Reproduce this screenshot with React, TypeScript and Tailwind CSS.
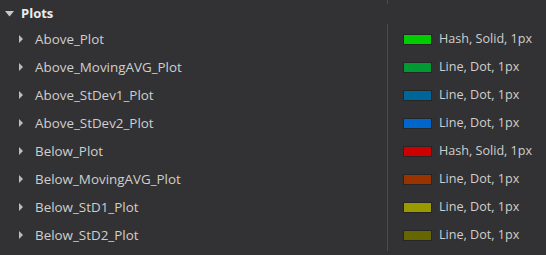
import React from 'react';

const rows = [
  { name: 'Above_Plot', color: '#00cc00', style: 'Hash, Solid, 1px' },
  { name: 'Above_MovingAVG_Plot', color: '#009933', style: 'Line, Dot, 1px' },
  { name: 'Above_StDev1_Plot', color: '#006699', style: 'Line, Dot, 1px' },
  { name: 'Above_StDev2_Plot', color: '#0066cc', style: 'Line, Dot, 1px' },
  { name: 'Below_Plot', color: '#cc0000', style: 'Hash, Solid, 1px' },
  { name: 'Below_MovingAVG_Plot', color: '#993300', style: 'Line, Dot, 1px' },
  { name: 'Below_StD1_Plot', color: '#999900', style: 'Line, Dot, 1px' },
  { name: 'Below_StD2_Plot', color: '#666600', style: 'Line, Dot, 1px' },
];

const Caret = ({ open }: { open?: boolean }) =>
  open ? (
    <svg width="9" height="6" viewBox="0 0 9 6" className="shrink-0">
      <path d="M0 0 H9 L4.5 5.5 Z" fill="#c8c8c8" />
    </svg>
  ) : (
    <svg width="4" height="8" viewBox="0 0 4 8" className="shrink-0">
      <path d="M0 0 L4 4 L0 8 Z" fill="#bdbdbd" />
    </svg>
  );

export default function App() {
  return (
    <div
      className="w-[546px] h-[255px] bg-[#323234] overflow-hidden"
      style={{ fontFamily: '"Open Sans", "Liberation Sans", sans-serif' }}
    >
      <div className="flex h-[24px]">
        <div className="flex w-[387px] items-center gap-[7px] pl-[5px] pt-[3px] text-[13px]">
          <Caret open />
          <span className="font-bold text-[#ececec]">Plots</span>
        </div>
        <div className="h-[4px] w-px bg-[#4a4a4c]" />
      </div>
      <div className="flex">
        <div className="flex w-[387px] flex-col pt-px">
          {rows.map((r) => (
            <div
              key={r.name}
              className="flex h-[28px] items-center gap-[12px] pl-[19px] text-[13.4px] text-[#cfcfcf]"
            >
              <Caret />
              <span>{r.name}</span>
            </div>
          ))}
        </div>
        <div className="flex h-[227px] flex-col border-l border-[#4a4a4c] pl-[15px] pt-px">
          {rows.map((r) => (
            <div key={r.name} className="flex h-[28px] items-center text-[12.6px] text-[#cfcfcf]">
              <div
                className="h-[11px] w-[29px] shrink-0 border border-[#262628]"
                style={{ backgroundColor: r.color }}
              />
              <span className="ml-[7px]">{r.style}</span>
            </div>
          ))}
        </div>
      </div>
    </div>
  );
}
